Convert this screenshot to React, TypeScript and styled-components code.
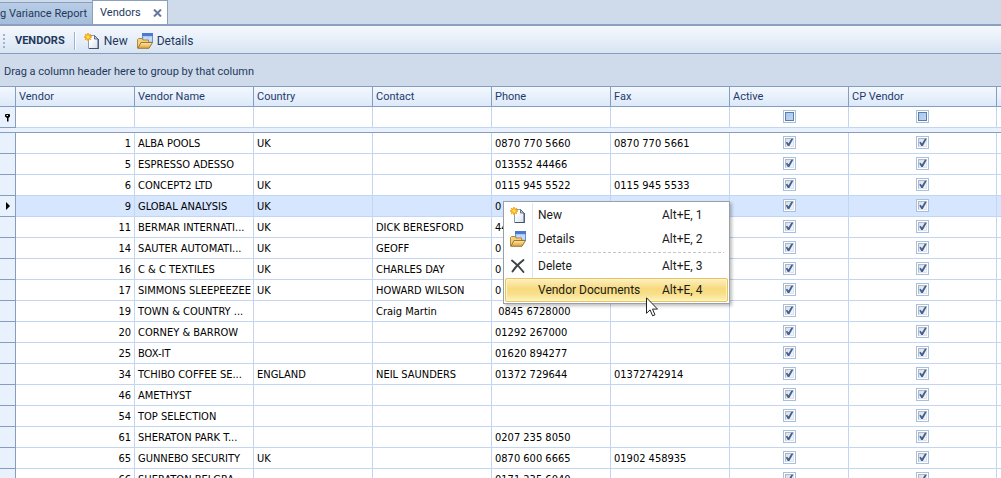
import React from 'react';
import styled, { createGlobalStyle, css } from 'styled-components';

const gridFont = '"DejaVu Sans Condensed", "DejaVu Sans", Tahoma, sans-serif';
const labelFont = 'Roboto, "Segoe UI", sans-serif';

const color = {
  frame: '#cfdbeb',
  line: '#859ebf',
  cellLine: '#c2d6f3',
  ink: '#1e395b',
  header: '#1f3a6e',
  indicator: '#e9f2fc',
  selected: '#d5e6fe',
};

const GlobalStyle = createGlobalStyle`
  *, *::before, *::after { box-sizing: border-box; }
  body { margin: 0; overflow: hidden; }
`;

const Page = styled.div`
  position: relative;
  display: flex;
  flex-direction: column;
  height: 100vh;
  overflow: hidden;
  background: ${color.frame};
  color: #000;
  font: 11px/20px ${labelFont};
`;

const TabStrip = styled.div`
  display: flex;
  flex: none;
  align-items: flex-end;
  height: 26px;
  border-bottom: 2px solid #8ba0c0;
`;

const Tab = styled.div<{ $active?: boolean }>`
  display: flex;
  align-items: center;
  gap: 12px;
  height: ${p => (p.$active ? 24 : 22)}px;
  padding: ${p => (p.$active ? '1px 5px 0 7px' : '1px 5px 0 0')};
  border: 1px solid #8ba0c0;
  border-bottom: 0;
  border-left-width: ${p => (p.$active ? 1 : 0)}px;
  border-right-width: ${p => (p.$active ? 1 : 0)}px;
  background: ${p => (p.$active ? '#fff' : 'linear-gradient(#b9cde6, #a5bddb)')};
`;

const TabLabel = styled.button`
  padding: 0;
  border: 0;
  background: none;
  color: ${color.ink};
  font: inherit;
  white-space: nowrap;
`;

const CloseButton = styled.button`
  display: flex;
  padding: 0;
  border: 0;
  background: none;
`;

const Toolbar = styled.div`
  display: flex;
  flex: none;
  align-items: center;
  height: 28px;
  padding: 2px 3px 0;
  border-bottom: 1px solid ${color.line};
  background: linear-gradient(#f4f8fd, #e4edf8 60%, #d8e4f2);
  color: ${color.ink};
`;

const Grip = styled.div`
  width: 2px;
  height: 14px;
  margin-right: 10px;
  background: repeating-linear-gradient(#9fb2cd 0 2px, transparent 2px 4px);
`;

const ToolbarTitle = styled.strong`
  margin-right: 9px;
`;

const Divider = styled.div`
  width: 2px;
  height: 18px;
  margin-right: 8px;
  border-left: 1px solid #9fb2cd;
  background: #fff;
`;

const ToolButton = styled.button`
  display: flex;
  align-items: center;
  gap: 4px;
  margin-right: 9px;
  padding: 0;
  border: 0;
  background: none;
  color: inherit;
  font: 12px/20px ${labelFont};
`;

const GroupPanel = styled.div`
  flex: none;
  height: 32px;
  padding: 0 4px;
  color: ${color.ink};
  line-height: 36px;
`;

const GridArea = styled.div`
  flex: 1;
  min-height: 0;
  overflow: hidden;
  background: #fff;
`;

const Grid = styled.table`
  width: 100%;
  table-layout: fixed;
  border-collapse: separate;
  border-spacing: 0;
`;

const HeaderCell = styled.th`
  height: 21px;
  padding: 0 3px;
  border: 1px solid ${color.line};
  border-left: 0;
  background: linear-gradient(#f3f8fe, #dde9f9);
  color: ${color.header};
  font-weight: normal;
  line-height: 18px;
  text-align: left;

  &:last-child { border-right: 0; }
`;

const cellBox = css`
  height: 21px;
  border-right: 1px solid ${color.cellLine};
  border-bottom: 1px solid ${color.cellLine};
`;

const Row = styled.tr<{ $selected?: boolean }>`
  background: ${p => (p.$selected ? color.selected : '#fff')};
`;

const Cell = styled.td<{ $align?: 'right' }>`
  ${cellBox}
  padding: 2px 3px 0;
  overflow: hidden;
  font: 11px/18px ${gridFont};
  text-align: ${p => p.$align ?? 'left'};
  white-space: pre;

  &:last-child { border-right: 0; }
`;

const IndicatorCell = styled.td`
  ${cellBox}
  padding: 0;
  border-color: ${color.line};
  background: ${color.indicator};

  svg { display: block; margin: 0 auto; }
`;

const GapCell = styled.td`
  height: 5px;
  padding: 0;
  border-bottom: 1px solid ${color.line};
  background: ${color.indicator};
`;

const Check = styled.input`
  display: block;
  appearance: none;
  position: relative;
  width: 13px;
  height: 13px;
  margin: 0 auto 3px;
  padding: 1px;
  border: 1px solid #a8c0e0;
  background: #fff;

  &::before {
    content: '';
    display: block;
    height: 9px;
    border: 1px solid #b1b8c2;
    border-right-color: #dfe3e8;
    border-bottom-color: #dfe3e8;
    background: linear-gradient(135deg, #dcdfe4, #f4f5f6);
  }
  &:checked::after {
    content: '';
    position: absolute;
    inset: 1px;
    background: #3d6199;
    clip-path: polygon(14% 50%, 30% 42%, 44% 62%, 76% 8%, 98% 8%, 54% 90%, 36% 90%);
  }
  &[data-mixed]::before {
    border-color: #5a7db0;
    background: linear-gradient(135deg, #aac8ea, #bdd5f0);
  }
`;

const Menu = styled.div`
  position: absolute;
  left: 503px;
  top: 201px;
  width: 227px;
  padding: 1px;
  border: 1px solid #9a9fa8;
  background: linear-gradient(#e2e4e8, #e2e4e8) 28px 1px / 1px 75px no-repeat #fff;
  box-shadow: 2px 2px 3px rgba(0, 0, 0, 0.25);
`;

const MenuItem = styled.button<{ $hot?: boolean }>`
  display: grid;
  grid-template-columns: 28px 124px 1fr;
  align-items: center;
  width: 100%;
  height: 24px;
  padding: 0 4px;
  border: 1px solid ${p => (p.$hot ? '#e8c355' : 'transparent')};
  border-radius: 2px;
  background: ${p => (p.$hot ? 'linear-gradient(#fcefc2, #f7da7c 45%, #f8e08c 70%, #fdf3bd)' : 'none')};
  box-shadow: ${p => (p.$hot ? 'inset 0 0 0 1px #fdf3cf' : 'none')};
  color: #1b1b1b;
  font: 12px/20px ${labelFont};
  text-align: left;
  white-space: nowrap;
`;

const MenuRule = styled.div`
  height: 3px;
  margin: 0 4px 0 33px;
  background: repeating-linear-gradient(90deg, #c4c6c9 0 3px, transparent 3px 5px) 0 1px / 100% 1px no-repeat;
`;

const Pointer = styled.svg`
  position: absolute;
  left: 646px;
  top: 297px;
`;

const NewIcon = () => (
  <svg width="16" height="16" viewBox="0 0 16 16" aria-hidden="true">
    <defs>
      <linearGradient id="paper" x1="0" y1="0" x2="1" y2="1">
        <stop offset="0.3" stopColor="#fff" />
        <stop offset="1" stopColor="#d3deef" />
      </linearGradient>
    </defs>
    <path d="M4.5 2.5h6l3.500 3.500v9.500h-9.500z" fill="url(#paper)" stroke="#8d9bb5" />
    <path d="M14.300 6v9.600H5" fill="none" stroke="#46556f" strokeWidth="1.200" />
    <path d="M10.500 2.500V6h3.500z" fill="#c3cfe2" stroke="#53637f" strokeWidth="0.900" />
    <path d="M4 0v8M0 4h8M1.200 1.200l5.600 5.600M6.800 1.200L1.200 6.800" stroke="#f0a010" strokeWidth="1.500" />
    <circle cx="4" cy="4" r="2.200" fill="#ffe23a" stroke="#f39a16" strokeWidth="0.800" />
  </svg>
);

const FolderIcon = () => (
  <svg width="16" height="16" viewBox="0 0 16 16" aria-hidden="true">
    <defs>
      <linearGradient id="folder" x1="0" y1="0" x2="0" y2="1">
        <stop offset="0" stopColor="#ffe9a0" />
        <stop offset="1" stopColor="#e0a23a" />
      </linearGradient>
    </defs>
    <rect x="5.500" y="0.500" width="10" height="9" fill="#a9c8f5" stroke="#6d8fd0" />
    <path d="M5 0h11v3H5z" fill="#4d78d0" />
    <path d="M7 4h3.500v4H7zM11.500 4H15v4h-3.500z" fill="#c5dafa" />
    <path d="M0.500 15V6.500l1-1H5l1 1.500h5.500V10" fill="#f3d079" stroke="#b08a3e" />
    <path d="M0.800 15.300L4 9.500h11.500L12 15.300z" fill="url(#folder)" stroke="#8f6d32" strokeWidth="0.900" />
  </svg>
);

const DeleteIcon = () => (
  <svg width="16" height="16" viewBox="0 0 16 16" aria-hidden="true">
    <path d="M2 2.500C6 5.500 10.500 10 13.500 14M13.500 2C9.500 5 5 9.500 2.500 13.500" fill="none" stroke="#3d4045" strokeWidth="1.900" strokeLinecap="round" />
  </svg>
);

const CloseIcon = () => (
  <svg width="9" height="8" viewBox="0 0 9 8" aria-hidden="true">
    <path d="M1 0.500l7 7M8 0.500l-7 7" stroke="#66789b" strokeWidth="2" />
  </svg>
);

const FilterIcon = () => (
  <svg width="7" height="9" viewBox="0 0 7 9" aria-hidden="true">
    <path d="M1 1.500L2 1h3l1 0.500v2L4.500 5v3.500h-1.500V5L1 3.500z" fill="#000" />
    <path d="M2.500 2h1.500v1H2.500z" fill="#fff" />
  </svg>
);

const RowArrow = () => (
  <svg width="4" height="8" viewBox="0 0 4 8" aria-hidden="true">
    <path d="M0 0l4 4-4 4z" fill="#000" />
  </svg>
);

const columns = ['Vendor', 'Vendor Name', 'Country', 'Contact', 'Phone', 'Fax', 'Active', 'CP Vendor'];

type Vendor = [id: number, name: string, country: string, contact: string, phone: string, fax: string];

const vendors: Vendor[] = [
  [1, 'ALBA POOLS', 'UK', '', '0870 770 5660', '0870 770 5661'],
  [5, 'ESPRESSO ADESSO', '', '', '013552 44466', ''],
  [6, 'CONCEPT2 LTD', 'UK', '', '0115 945 5522', '0115 945 5533'],
  [9, 'GLOBAL ANALYSIS', 'UK', '', '0', ''],
  [11, 'BERMAR INTERNATI...', 'UK', 'DICK BERESFORD', '44', ''],
  [14, 'SAUTER AUTOMATI...', 'UK', 'GEOFF', '0', ''],
  [16, 'C & C TEXTILES', 'UK', 'CHARLES DAY', '0', ''],
  [17, 'SIMMONS SLEEPEEZEE', 'UK', 'HOWARD WILSON', '0', ''],
  [19, 'TOWN & COUNTRY ...', '', 'Craig Martin', ' 0845 6728000', ''],
  [20, 'CORNEY & BARROW', '', '', '01292 267000', ''],
  [25, 'BOX-IT', '', '', '01620 894277', ''],
  [34, 'TCHIBO COFFEE SE...', 'ENGLAND', 'NEIL SAUNDERS', '01372 729644', '01372742914'],
  [46, 'AMETHYST', '', '', '', ''],
  [54, 'TOP SELECTION', '', '', '', ''],
  [61, 'SHERATON PARK T...', '', '', '0207 235 8050', ''],
  [65, 'GUNNEBO SECURITY', 'UK', '', '0870 600 6665', '01902 458935'],
  [66, 'SHERATON BELGRA...', '', '', '0171 235 6040', ''],
];

const selectedId = 9;

export default function App() {
  return (
    <Page>
      <GlobalStyle />
      <TabStrip>
        <Tab>
          <TabLabel>g Variance Report</TabLabel>
        </Tab>
        <Tab $active>
          <TabLabel>Vendors</TabLabel>
          <CloseButton aria-label="Close tab">
            <CloseIcon />
          </CloseButton>
        </Tab>
      </TabStrip>

      <Toolbar>
        <Grip />
        <ToolbarTitle>VENDORS</ToolbarTitle>
        <Divider />
        <ToolButton>
          <NewIcon />
          New
        </ToolButton>
        <ToolButton>
          <FolderIcon />
          Details
        </ToolButton>
      </Toolbar>

      <GroupPanel>Drag a column header here to group by that column</GroupPanel>

      <GridArea>
        <Grid>
          <colgroup>
            <col style={{ width: 16 }} />
            {columns.map(c => (
              <col key={c} style={{ width: c === 'CP Vendor' ? 148 : 119 }} />
            ))}
            <col />
          </colgroup>
          <thead>
            <tr>
              <HeaderCell />
              {columns.map(c => (
                <HeaderCell key={c} scope="col">{c}</HeaderCell>
              ))}
              <HeaderCell />
            </tr>
          </thead>
          <tbody>
            <Row>
              <IndicatorCell>
                <FilterIcon />
              </IndicatorCell>
              {columns.slice(0, 6).map(c => (
                <Cell key={c} />
              ))}
              <Cell>
                <Check type="checkbox" data-mixed aria-label="Filter by Active" />
              </Cell>
              <Cell>
                <Check type="checkbox" data-mixed aria-label="Filter by CP Vendor" />
              </Cell>
              <Cell />
            </Row>
            <tr>
              <GapCell colSpan={10} />
            </tr>
            {vendors.map(([id, name, country, contact, phone, fax]) => (
              <Row key={id} $selected={id === selectedId}>
                <IndicatorCell>{id === selectedId && <RowArrow />}</IndicatorCell>
                <Cell $align="right">{id}</Cell>
                <Cell>{name}</Cell>
                <Cell>{country}</Cell>
                <Cell>{contact}</Cell>
                <Cell>{phone}</Cell>
                <Cell>{fax}</Cell>
                <Cell>
                  <Check type="checkbox" defaultChecked aria-label={`${name} active`} />
                </Cell>
                <Cell>
                  <Check type="checkbox" defaultChecked aria-label={`${name} CP vendor`} />
                </Cell>
                <Cell />
              </Row>
            ))}
          </tbody>
        </Grid>
      </GridArea>

      <Menu role="menu">
        <MenuItem role="menuitem">
          <NewIcon />
          <span>New</span>
          <span>Alt+E, 1</span>
        </MenuItem>
        <MenuItem role="menuitem">
          <FolderIcon />
          <span>Details</span>
          <span>Alt+E, 2</span>
        </MenuItem>
        <MenuRule role="separator" />
        <MenuItem role="menuitem">
          <DeleteIcon />
          <span>Delete</span>
          <span>Alt+E, 3</span>
        </MenuItem>
        <MenuItem role="menuitem" $hot>
          <span />
          <span>Vendor Documents</span>
          <span>Alt+E, 4</span>
        </MenuItem>
      </Menu>

      <Pointer width="13" height="20" viewBox="0 0 13 20" aria-hidden="true">
        <path d="M0.500 0.800v15.500l3.600-3.400 2.500 5.900 2.400-1-2.500-5.700h5z" fill="#fff" stroke="#222" />
      </Pointer>
    </Page>
  );
}
